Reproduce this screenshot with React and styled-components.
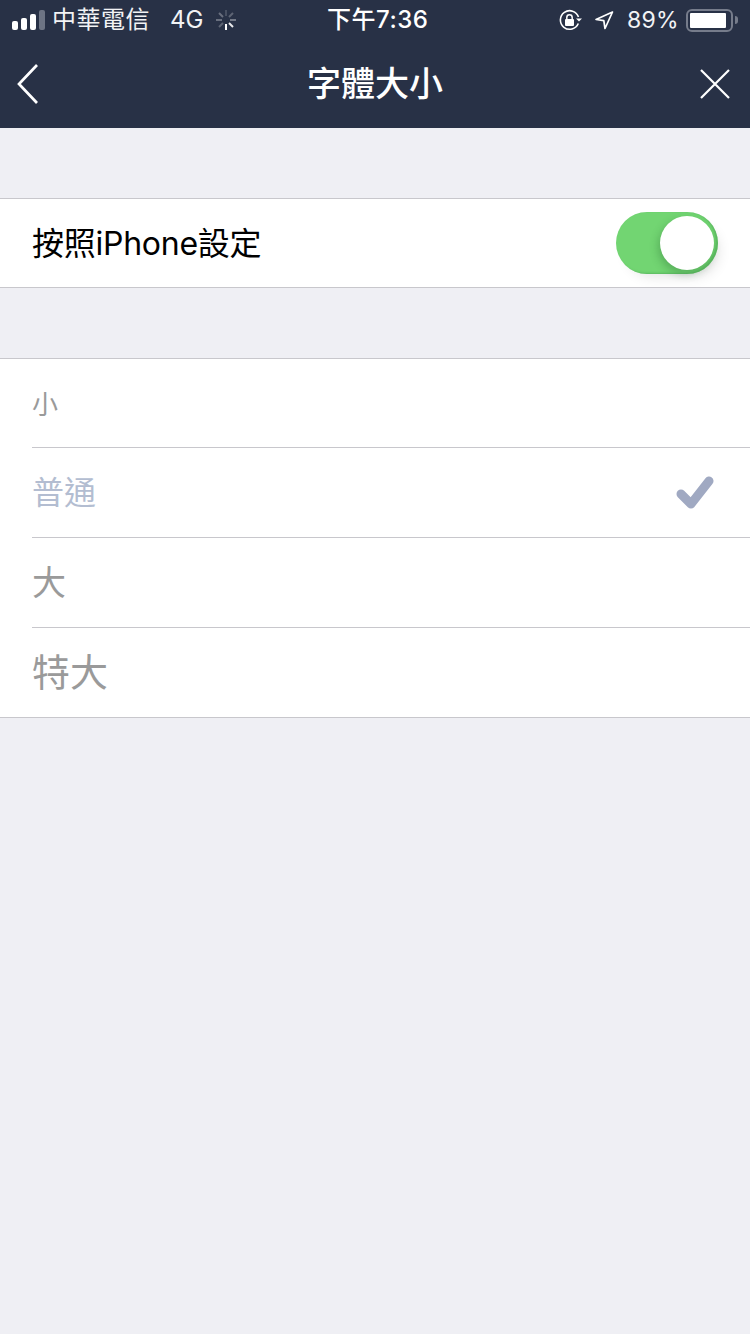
import React from "react";
import styled, { createGlobalStyle } from "styled-components";

const FONT = `Inter, "Noto Sans CJK TC", "Liberation Sans", sans-serif`;

const GlobalStyle = createGlobalStyle`
  html, body {
    margin: 0;
    padding: 0;
    background: #efeff4;
  }
  * { box-sizing: border-box; }
`;

const Page = styled.div`
  width: 750px;
  height: 1334px;
  overflow: hidden;
  background: #efeff4;
  font-family: ${FONT};
`;

const Header = styled.header`
  background: #283146;
  height: 128px;
  color: #fff;
`;

const StatusBar = styled.div`
  height: 40px;
  display: flex;
  align-items: center;
  justify-content: space-between;
  position: relative;
  padding: 0 12px 0 12px;
  font-size: 24px;
  line-height: 40px;
`;

const StatusGroup = styled.div`
  display: flex;
  align-items: center;
`;

const Signal = styled.div`
  display: flex;
  align-items: flex-end;
  gap: 3px;
  height: 20px;
  margin-right: 7px;
`;

const SignalBar = styled.span`
  width: 6px;
  height: ${(p) => p.$h}px;
  border-radius: 2px;
  background: ${(p) => (p.$off ? "#6d7484" : "#fff")};
`;

const Carrier = styled.span`
  font-size: 24px;
  letter-spacing: 0.5px;
  color: #f2f3f5;
`;

const Network = styled.span`
  margin-left: 20px;
  margin-right: 13px;
  color: #f2f3f5;
`;

const Time = styled.span`
  position: absolute;
  left: 327px;
  top: 0;
  font-size: 24px;
  font-weight: 500;
  letter-spacing: 0.5px;
`;

const Percent = styled.span`
  margin: 0 7px 0 13px;
  font-size: 23px;
  letter-spacing: 0.3px;
  color: #f2f3f5;
`;

const Battery = styled.div`
  width: 47px;
  height: 23px;
  border: 2px solid #767c8b;
  border-radius: 6px;
  padding: 2px;
  position: relative;
`;

const BatteryFill = styled.div`
  width: 36px;
  height: 15px;
  background: #fff;
  border-radius: 1px;
`;

const BatteryTip = styled.span`
  width: 3px;
  height: 8px;
  margin-left: 2px;
  background: #767c8b;
  border-radius: 0 3px 3px 0;
`;

const NavBar = styled.nav`
  height: 88px;
  display: flex;
  align-items: center;
  justify-content: space-between;
  padding: 0 19px 0 16px;
  position: relative;
`;

const Title = styled.h1`
  position: absolute;
  left: 0;
  right: 0;
  margin: 0;
  text-align: center;
  font-size: 34px;
  font-weight: 500;
  line-height: 88px;
`;

const Section = styled.section`
  margin-top: 70px;
  background: #fff;
  border-top: 1px solid #c8c7cc;
  border-bottom: 1px solid #c8c7cc;
`;

const ToggleRow = styled.div`
  height: 88px;
  display: flex;
  align-items: center;
  justify-content: space-between;
  padding: 0 32px;
  font-size: 32px;
  color: #000;
`;

const ToggleLabel = styled.span`
  padding-bottom: 5px;
  letter-spacing: -0.25px;
`;

const Toggle = styled.div`
  width: 102px;
  height: 62px;
  border-radius: 31px;
  background: #72d572;
  position: relative;
  box-shadow: inset -2px -1px 2px rgba(70, 160, 80, 0.5), 6px 8px 14px -6px rgba(0, 0, 0, 0.12);
`;

const Knob = styled.div`
  position: absolute;
  top: 4px;
  right: 4px;
  width: 54px;
  height: 54px;
  border-radius: 50%;
  background: #fff;
  box-shadow: -2px 4px 8px rgba(30, 90, 40, 0.3);
`;

const Option = styled.div`
  height: 90px;
  margin-left: 32px;
  padding-right: 36px;
  display: flex;
  align-items: center;
  justify-content: space-between;
  border-bottom: 1px solid #c8c7cc;
  font-size: ${(p) => p.$size}px;
  color: ${(p) => (p.$active ? "#b3bdd1" : "#9a9a9a")};

  &:first-child {
    height: 89px;
  }
  &:last-child {
    height: 89px;
    border-bottom: none;
  }
`;

const OptionLabel = styled.span`
  padding-bottom: ${(p) => p.$lift}px;
`;

const options = [
  { label: "小", size: 26, lift: 1 },
  { label: "普通", size: 32, lift: 5, active: true },
  { label: "大", size: 34, lift: 5 },
  { label: "特大", size: 38, lift: 7 },
];

const App = () => {
  return (
    <Page>
      <GlobalStyle />
      <Header>
        <StatusBar>
          <StatusGroup>
            <Signal>
              <SignalBar $h={9} />
              <SignalBar $h={12} />
              <SignalBar $h={16} />
              <SignalBar $h={20} $off />
            </Signal>
            <Carrier>中華電信</Carrier>
            <Network>4G</Network>
            <svg width="20" height="20" viewBox="0 0 20 20" stroke="#fff" strokeWidth="2">
              <line x1="10" y1="0" x2="10" y2="6" opacity="0.15" />
              <line x1="17" y1="3" x2="13" y2="7" opacity="0.25" />
              <line x1="20" y1="10" x2="14" y2="10" opacity="0.35" />
              <line x1="17" y1="17" x2="13" y2="13" opacity="0.9" />
              <line x1="10" y1="20" x2="10" y2="14" />
              <line x1="3" y1="17" x2="7" y2="13" opacity="0.25" />
              <line x1="0" y1="10" x2="6" y2="10" opacity="0.3" />
              <line x1="3" y1="3" x2="7" y2="7" opacity="0.3" />
            </svg>
          </StatusGroup>
          <Time>下午7:36</Time>
          <StatusGroup>
            <svg width="24" height="22" viewBox="0 0 24 22" fill="none">
              <path d="M19.3 14.5A9.3 9.3 0 1 1 19.5 8" stroke="#fff" strokeWidth="1.6" />
              <path d="M17 9.5h6l-3 3z" fill="#fff" />
              <rect x="6" y="10" width="9" height="7" rx="1" fill="#fff" />
              <path d="M7.8 10V8.5a2.7 2.7 0 0 1 5.4 0V10" stroke="#fff" strokeWidth="1.5" />
            </svg>
            <svg width="20" height="20" viewBox="0 0 20 20" fill="none" style={{ marginLeft: 11 }}>
              <path d="M18.5 2 2 9.5l7.8 1.2L11 18.5z" stroke="#fff" strokeWidth="1.7" strokeLinejoin="round" />
            </svg>
            <Percent>89%</Percent>
            <Battery>
              <BatteryFill />
            </Battery>
            <BatteryTip />
          </StatusGroup>
        </StatusBar>
        <NavBar>
          <svg width="24" height="42" viewBox="0 0 24 42" fill="none" stroke="#fff" strokeWidth="2.7">
            <path d="M21 2 3 21l18 19" />
          </svg>
          <Title>字體大小</Title>
          <svg width="32" height="32" viewBox="0 0 32 32" fill="none" stroke="#fff" strokeWidth="2.2">
            <path d="M2 2l28 28M30 2 2 30" />
          </svg>
        </NavBar>
      </Header>

      <Section>
        <ToggleRow>
          <ToggleLabel>按照iPhone設定</ToggleLabel>
          <Toggle>
            <Knob />
          </Toggle>
        </ToggleRow>
      </Section>

      <Section>
        {options.map((o) => (
          <Option key={o.label} $size={o.size} $active={o.active}>
            <OptionLabel $lift={o.lift}>{o.label}</OptionLabel>
            {o.active && (
              <svg width="38" height="34" viewBox="0 0 38 34" fill="none" stroke="#a0a9c2" strokeWidth="9" strokeLinecap="round" strokeLinejoin="round">
                <path d="M5 18l10 10L33 5" />
              </svg>
            )}
          </Option>
        ))}
      </Section>
    </Page>
  );
};

export default App;
